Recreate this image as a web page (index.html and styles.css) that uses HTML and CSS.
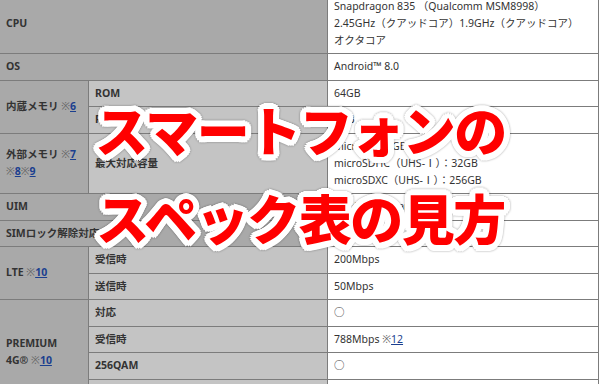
FILE: index.html
```html
<!DOCTYPE html>
<html lang="ja">
<head>
    <meta charset="UTF-8">
    <meta name="viewport" content="width=device-width, initial-scale=1.0">
    <title>スマートフォンのスペック表の見方</title>
    <link rel="stylesheet" href="styles.css">
</head>
<body>
    <div class="page">
        <table class="spec">
            <colgroup>
                <col class="col-head">
                <col class="col-sub">
                <col>
            </colgroup>
            <tr>
                <th colspan="2">CPU</th>
                <td>Snapdragon 835 （Qualcomm MSM8998）<br>2.45GHz（クアッドコア）1.9GHz（クアッドコア）<br>オクタコア</td>
            </tr>
            <tr>
                <th colspan="2">OS</th>
                <td>Android™ 8.0</td>
            </tr>
            <tr>
                <th rowspan="2">内蔵メモリ <span class="note">※<a href="#n6">6</a></span></th>
                <th class="sub">ROM</th>
                <td>64GB</td>
            </tr>
            <tr>
                <th class="sub">RAM</th>
                <td>4GB</td>
            </tr>
            <tr>
                <th>外部メモリ <span class="note">※<a href="#n7">7</a></span> <span class="note">※<a href="#n8">8</a>※<a href="#n9">9</a></span></th>
                <th class="sub">最大対応容量</th>
                <td>microSD：2GB<br>microSDHC（UHS-Ⅰ）：32GB<br>microSDXC（UHS-Ⅰ）：256GB</td>
            </tr>
            <tr>
                <th colspan="2">UIM</th>
                <td>au Nano IC Card 04</td>
            </tr>
            <tr>
                <th colspan="2">SIMロック解除対応</th>
                <td>○</td>
            </tr>
            <tr>
                <th rowspan="2">LTE <span class="note">※<a href="#n10">10</a></span></th>
                <th class="sub">受信時</th>
                <td>200Mbps</td>
            </tr>
            <tr>
                <th class="sub">送信時</th>
                <td>50Mbps</td>
            </tr>
            <tr>
                <th rowspan="4">PREMIUM 4G® <span class="note">※<a href="#n10">10</a></span></th>
                <th class="sub">対応</th>
                <td>○</td>
            </tr>
            <tr>
                <th class="sub">受信時</th>
                <td>788Mbps <span class="note">※<a href="#n12">12</a></span></td>
            </tr>
            <tr>
                <th class="sub">256QAM</th>
                <td>○</td>
            </tr>
            <tr>
                <th class="sub">送信時</th>
                <td>75Mbps</td>
            </tr>
        </table>

        <h1 class="headline">スマートフォンの<br>スペック表の見方</h1>
    </div>
</body>
</html>
```

FILE: styles.css
```css
body {
    margin: 0;
    background-color: #fff;
    font-family: "Noto Sans", "Noto Sans CJK JP", sans-serif;
    color: #333;
    overflow: hidden;
}
.page {
    position: relative;
    width: 600px;
    height: 384px;
    overflow: hidden;
}

/* spec table */
.spec {
    border-collapse: collapse;
    table-layout: fixed;
    width: 600px;
    margin: -7.5px 0 0 -1px;
    font-size: 10.5px;
    line-height: 17px;
}
.col-head {
    width: 89px;
}
.col-sub {
    width: 239px;
}
.spec th,
.spec td {
    border: 1px solid #7c7c7c;
    padding: 4px 6px 4.5px;
    text-align: left;
    vertical-align: middle;
}
.spec th {
    background-color: #a9a9a9;
    font-weight: bold;
}
.spec th.sub {
    background-color: #c4c4c4;
}
.spec td {
    background-color: #fff;
}
.note {
    font-weight: normal;
    color: #666;
}
.note a {
    color: #1b3f8f;
    font-weight: bold;
    text-decoration: underline;
}
.spec td .note a {
    font-weight: normal;
}

/* title over the table */
.headline {
    position: absolute;
    left: 0;
    right: 0;
    top: 85px;
    margin: 0;
    padding-left: 1px;
    text-align: center;
    font-family: "Noto Sans CJK JP", sans-serif;
    font-weight: 900;
    font-size: 53px;
    line-height: 88px;
    letter-spacing: -1.5px;
    color: #ff0000;
    text-shadow:
        6px 0 #fff, 5.5px 2.3px #fff, 4.2px 4.2px #fff, 2.3px 5.5px #fff,
        0 6px #fff, -2.3px 5.5px #fff, -4.2px 4.2px #fff, -5.5px 2.3px #fff,
        -6px 0 #fff, -5.5px -2.3px #fff, -4.2px -4.2px #fff, -2.3px -5.5px #fff,
        0 -6px #fff, 2.3px -5.5px #fff, 4.2px -4.2px #fff, 5.5px -2.3px #fff,
        3px 0 #fff, 0 3px #fff, -3px 0 #fff, 0 -3px #fff,
        2px 2px #fff, -2px 2px #fff, 2px -2px #fff, -2px -2px #fff;
    filter: drop-shadow(0 0 1px rgba(0, 0, 0, 0.35));
}
```
